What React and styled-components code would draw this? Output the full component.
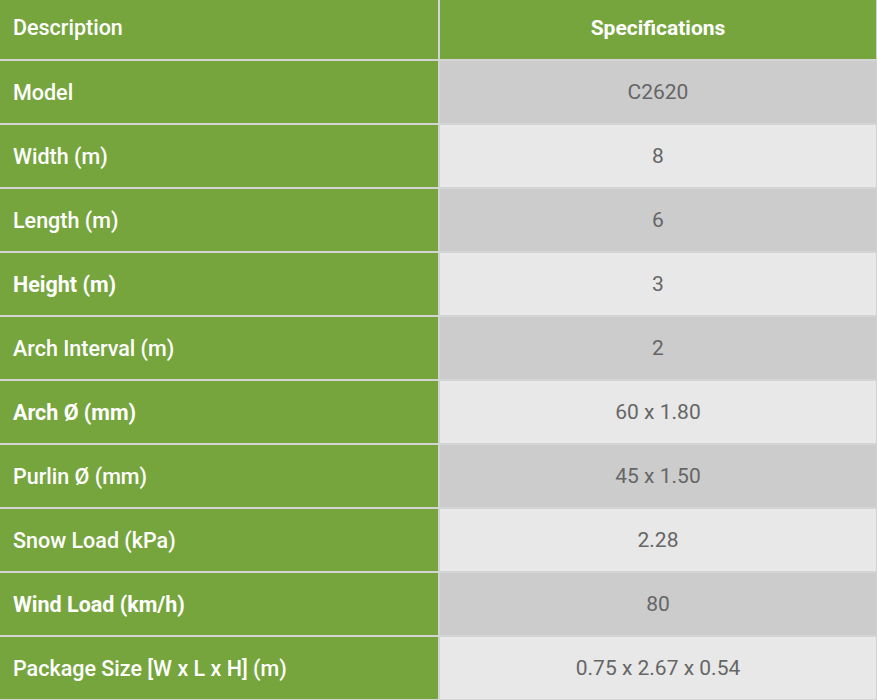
import React from 'react'
import styled, { createGlobalStyle } from 'styled-components'

const rows = [
  { label: 'Model', value: 'C2620' },
  { label: 'Width (m)', value: '8' },
  { label: 'Length (m)', value: '6' },
  { label: 'Height (m)', value: '3', bold: true },
  { label: 'Arch Interval (m)', value: '2' },
  { label: 'Arch Ø (mm)', value: '60 x 1.80', bold: true },
  { label: 'Purlin Ø (mm)', value: '45 x 1.50' },
  { label: 'Snow Load (kPa)', value: '2.28' },
  { label: 'Wind Load (km/h)', value: '80', bold: true },
  { label: 'Package Size [W x L x H] (m)', value: '0.75 x 2.67 x 0.54' },
]

const Global = createGlobalStyle`
  body{
    margin:0;
    background:#fff;
    font-family:Roboto,"Liberation Sans",sans-serif;
  }
`

const Table = styled.div`
  width:877px;
  border-right:1px solid #d2d2d2;
  box-sizing:border-box;
`

const Row = styled.div`
  display:grid;
  grid-template-columns:440px 1fr;
  height:${p => p.$head ? '59px' : '62px'};
  border-bottom:2px solid #d4d4d4;
`

const Label = styled.div`
  background:#76a53e;
  color:#fff;
  display:flex;
  align-items:center;
  padding-left:13px;
  padding-bottom:${p => p.$head ? '4px' : '0'};
  font-size:21.5px;
  font-weight:${p => p.$bold ? 700 : 500};
  border-right:2px solid #d4d4d4;
`

const Value = styled.div`
  display:flex;
  align-items:center;
  justify-content:center;
  padding-bottom:${p => p.$head ? '4px' : '0'};
  font-size:21px;
  background:${p => p.$head ? '#76a53e' : p.$alt ? '#e8e8e8' : '#cccccc'};
  color:${p => p.$head ? '#fff' : '#666'};
  font-weight:${p => p.$head ? 700 : 400};
`

export default function App() {
  return (
    <>
      <Global />
      <Table>
        <Row $head>
          <Label $head>Description</Label>
          <Value $head>Specifications</Value>
        </Row>
        {rows.map((r, i) => (
          <Row key={r.label}>
            <Label $bold={r.bold}>{r.label}</Label>
            <Value $alt={i % 2 === 1}>{r.value}</Value>
          </Row>
        ))}
      </Table>
    </>
  )
}
